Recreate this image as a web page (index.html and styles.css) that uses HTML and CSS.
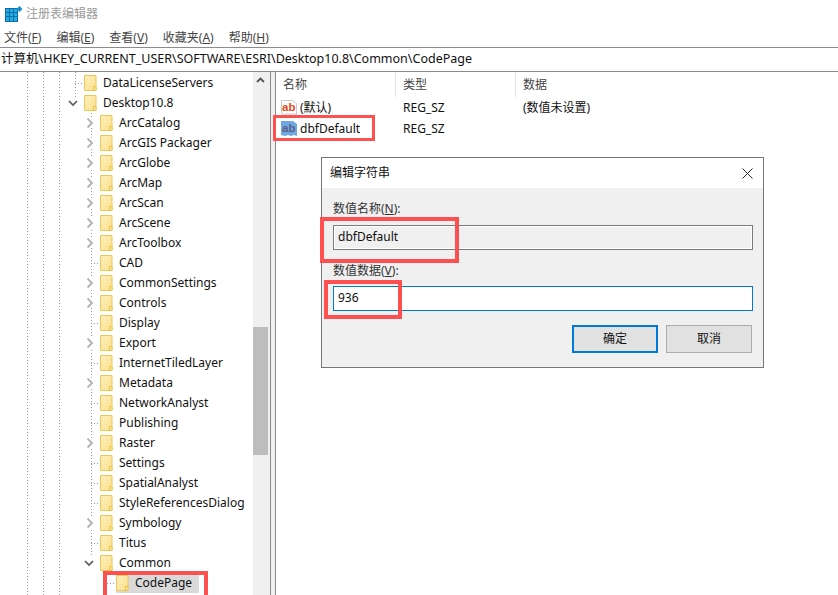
FILE: index.html
```html
<!DOCTYPE html>
<html lang="zh">
<head>
<meta charset="utf-8">
<title>注册表编辑器</title>
<link rel="stylesheet" href="styles.css">
</head>
<body>
<svg class="defs" width="0" height="0" aria-hidden="true">
  <defs>
    <linearGradient id="fg" x1="0" y1="0" x2="1" y2="1"><stop offset="0" stop-color="#fdf0bd"/><stop offset="1" stop-color="#fbdf8c"/></linearGradient>
    <symbol id="folder" viewBox="0 0 13 16">
      <path d="M.5.5h11.500v15H.5z" fill="url(#fg)" stroke="#eec856"/>
      <path d="M9.500 15.500v-4H12v4z" fill="#fbe9a8" stroke="#eec344"/>
    </symbol>
    <symbol id="open" viewBox="0 0 10 10"><path d="M1 3l4 4 4-4" fill="none" stroke="#5a5a5a" stroke-width="1.700"/></symbol>
    <symbol id="closed" viewBox="0 0 10 10"><path d="M3.500 .500L8 5 3.500 9.500" fill="none" stroke="#b4b4b4" stroke-width="1.900"/></symbol>
  </defs>
</svg>
<div class="app">
  <header class="titlebar">
    <svg class="appicon" width="18" height="16" viewBox="0 0 18 16">
      <path d="M0 2h13v14H0z" fill="#0b6fa8"/>
      <path d="M1 3h3v3H1zM5 3h3v3H5zM9 3h3v3H9zM1 7h3v3H1zM5 7h3v3H5zM9 7h3v3H9zM1 11h3v4H1zM5 11h3v4H5zM9 11h3v4H9z" fill="#27a9e6"/>
      <path d="M14.500 0l3 3-3 3-3-3z" fill="#1d8fd0"/>
    </svg>
    <span class="apptitle">注册表编辑器</span>
  </header>
  <nav class="menubar">
    <span class="menu">文件(<u>F</u>)</span>
    <span class="menu">编辑(<u>E</u>)</span>
    <span class="menu">查看(<u>V</u>)</span>
    <span class="menu">收藏夹(<u>A</u>)</span>
    <span class="menu">帮助(<u>H</u>)</span>
  </nav>
  <div class="address">计算机\HKEY_CURRENT_USER\SOFTWARE\ESRI\Desktop10.8\Common\CodePage</div>
  <main class="panes">
    <section class="treepane">
      <div class="tree">
        <div class="row l1 leaf"><i class="tw"></i><svg class="fo"><use href="#folder"/></svg><span>DataLicenseServers</span></div>
        <div class="row l1"><svg class="tw"><use href="#open"/></svg><svg class="fo"><use href="#folder"/></svg><span>Desktop10.8</span></div>
        <div class="row l2"><svg class="tw"><use href="#closed"/></svg><svg class="fo"><use href="#folder"/></svg><span>ArcCatalog</span></div>
        <div class="row l2"><svg class="tw"><use href="#closed"/></svg><svg class="fo"><use href="#folder"/></svg><span>ArcGIS Packager</span></div>
        <div class="row l2"><svg class="tw"><use href="#closed"/></svg><svg class="fo"><use href="#folder"/></svg><span>ArcGlobe</span></div>
        <div class="row l2"><svg class="tw"><use href="#closed"/></svg><svg class="fo"><use href="#folder"/></svg><span>ArcMap</span></div>
        <div class="row l2"><svg class="tw"><use href="#closed"/></svg><svg class="fo"><use href="#folder"/></svg><span>ArcScan</span></div>
        <div class="row l2"><svg class="tw"><use href="#closed"/></svg><svg class="fo"><use href="#folder"/></svg><span>ArcScene</span></div>
        <div class="row l2"><svg class="tw"><use href="#closed"/></svg><svg class="fo"><use href="#folder"/></svg><span>ArcToolbox</span></div>
        <div class="row l2 leaf"><i class="tw"></i><svg class="fo"><use href="#folder"/></svg><span>CAD</span></div>
        <div class="row l2"><svg class="tw"><use href="#closed"/></svg><svg class="fo"><use href="#folder"/></svg><span>CommonSettings</span></div>
        <div class="row l2"><svg class="tw"><use href="#closed"/></svg><svg class="fo"><use href="#folder"/></svg><span>Controls</span></div>
        <div class="row l2 leaf"><i class="tw"></i><svg class="fo"><use href="#folder"/></svg><span>Display</span></div>
        <div class="row l2"><svg class="tw"><use href="#closed"/></svg><svg class="fo"><use href="#folder"/></svg><span>Export</span></div>
        <div class="row l2 leaf"><i class="tw"></i><svg class="fo"><use href="#folder"/></svg><span>InternetTiledLayer</span></div>
        <div class="row l2"><svg class="tw"><use href="#closed"/></svg><svg class="fo"><use href="#folder"/></svg><span>Metadata</span></div>
        <div class="row l2 leaf"><i class="tw"></i><svg class="fo"><use href="#folder"/></svg><span>NetworkAnalyst</span></div>
        <div class="row l2 leaf"><i class="tw"></i><svg class="fo"><use href="#folder"/></svg><span>Publishing</span></div>
        <div class="row l2"><svg class="tw"><use href="#closed"/></svg><svg class="fo"><use href="#folder"/></svg><span>Raster</span></div>
        <div class="row l2 leaf"><i class="tw"></i><svg class="fo"><use href="#folder"/></svg><span>Settings</span></div>
        <div class="row l2 leaf"><i class="tw"></i><svg class="fo"><use href="#folder"/></svg><span>SpatialAnalyst</span></div>
        <div class="row l2 leaf"><i class="tw"></i><svg class="fo"><use href="#folder"/></svg><span>StyleReferencesDialog</span></div>
        <div class="row l2"><svg class="tw"><use href="#closed"/></svg><svg class="fo"><use href="#folder"/></svg><span>Symbology</span></div>
        <div class="row l2 leaf"><i class="tw"></i><svg class="fo"><use href="#folder"/></svg><span>Titus</span></div>
        <div class="row l2"><svg class="tw"><use href="#open"/></svg><svg class="fo"><use href="#folder"/></svg><span>Common</span></div>
        <div class="row l3 leaf selected"><i class="tw"></i><span class="selbox"><svg class="fo"><use href="#folder"/></svg><span>CodePage</span></span></div>
      </div>
      <div class="scrollbar">
        <svg class="arrow" width="15" height="17" viewBox="0 0 15 17"><path d="M4 10l3.500-3.500L11 10" fill="none" stroke="#555" stroke-width="1.800"/></svg>
        <div class="thumb"></div>
      </div>
    </section>
    <div class="splitter"></div>
    <section class="listpane">
      <div class="listhead">
        <div class="c1 h">名称</div>
        <div class="c2 h">类型</div>
        <div class="c3 h">数据</div>
      </div>
      <div class="listrow">
        <div class="c1">
          <svg class="regicon" width="16" height="16" viewBox="0 0 16 16">
            <path d="M.5.500h11l4 3v11l-3-1-3 1-3-1-3 1-3-1z" fill="#fff" stroke="#c9c9c9"/>
            <text x="1" y="10.500" class="ab red">ab</text>
          </svg>
          <span>(默认)</span>
        </div>
        <div class="c2">REG_SZ</div>
        <div class="c3">(数值未设置)</div>
      </div>
      <div class="listrow">
        <div class="c1">
          <svg class="regicon" width="16" height="16" viewBox="0 0 16 16">
            <path d="M0 0h12l4 3v12l-3-1-3 1-3-1-3 1-4-1z" fill="#6ea9df"/>
            <text x="1" y="10.500" class="ab blue">ab</text>
          </svg>
          <span>dbfDefault</span>
        </div>
        <div class="c2">REG_SZ</div>
      </div>
    </section>
  </main>
</div>

<div class="dialog">
  <div class="dlghead">
    <span>编辑字符串</span>
    <svg width="11" height="11" viewBox="0 0 11 11"><path d="M.5.500l10 10M10.500.500l-10 10" stroke="#222" fill="none"/></svg>
  </div>
  <div class="dlgbody">
    <label class="lab">数值名称(<u>N</u>):</label>
    <div class="field readonly">dbfDefault</div>
    <label class="lab second">数值数据(<u>V</u>):</label>
    <div class="field active">936</div>
    <div class="btns">
      <div class="btn default">确定</div>
      <div class="btn">取消</div>
    </div>
  </div>
</div>

<div class="mark m-list"></div>
<div class="mark m-name"></div>
<div class="mark m-value"></div>
<div class="mark m-tree"></div>
</body>
</html>
```
FILE: styles.css
```css
* { box-sizing: border-box; }
html, body { margin: 0; height: 100%; }
body {
  position: relative;
  width: 838px;
  height: 595px;
  overflow: hidden;
  background: #fff;
  color: #111;
  font: 12px/20px "Noto Sans", "Noto Sans CJK SC", sans-serif;
}
.defs { position: absolute; }
u { text-underline-offset: 1px; }

.app { display: flex; flex-direction: column; height: 595px; }

.titlebar { display: flex; align-items: center; height: 27px; padding: 0 0 0 5px; gap: 3px; flex: none; }
.apptitle { color: #9a9a9a; font-size: 12px; }

.menubar { display: flex; height: 20px; flex: none; padding: 1px 0 0 4px; gap: 15px; align-items: center; font-size: 12px; color: #444; }

.address { height: 25px; flex: none; border-top: 1px solid #8c8c8c; border-bottom: 1px solid #8c8c8c; padding-left: 1px; line-height: 22px; font-size: 12.500px; color: #111; white-space: nowrap; }

.panes { display: flex; flex: 1; min-height: 0; }

.treepane { width: 270px; display: flex; flex: none; position: relative; }
.tree {
  width: 253px; flex: none; overflow: hidden; padding-top: 1px;
  background:
    repeating-linear-gradient(#9a9a9a 0 1px, transparent 1px 3px) 27px 0 / 1px 100% no-repeat,
    repeating-linear-gradient(#9a9a9a 0 1px, transparent 1px 3px) 43px 0 / 1px 100% no-repeat,
    repeating-linear-gradient(#9a9a9a 0 1px, transparent 1px 3px) 59px 0 / 1px 100% no-repeat,
    repeating-linear-gradient(#9a9a9a 0 1px, transparent 1px 3px) 75px 0 / 1px 25px no-repeat,
    repeating-linear-gradient(#9a9a9a 0 1px, transparent 1px 3px) 91px 41px / 1px 442px no-repeat;
}
.row { display: flex; align-items: center; height: 20px; white-space: nowrap; }
.l1 { padding-left: 68px; }
.l2 { padding-left: 84px; }
.l3 { padding-left: 100px; }
.tw { width: 16px; height: 10px; flex: none; display: block; padding: 0 6px 0 0; background: #fff; }
.leaf .tw { background: repeating-linear-gradient(90deg, #9a9a9a 0 1px, transparent 1px 3px) 7px 50% / 7px 1px no-repeat; padding: 0; }
.fo { width: 13px; height: 16px; flex: none; margin-right: 6px; display: block; }
.selbox { display: flex; align-items: center; height: 19px; width: 83px; background: #d9d9d9; }
.selbox .fo { margin-right: 6px; }

.scrollbar { width: 17px; background: #f0f0f0; position: relative; flex: none; }
.arrow { display: block; }
.thumb { position: absolute; left: 0; top: 255px; width: 15px; height: 128px; background: #bdbdbd; }

.splitter { width: 6px; flex: none; background: #f0f0f0; border-left: 1px solid #8a8a92; border-right: 1px solid #8a8a92; }

.listpane { flex: 1; min-width: 0; }
.listhead { display: flex; height: 25px; align-items: stretch; }
.h { display: flex; align-items: center; color: #444; font-size: 12px; border-right: 1px solid #e4e4e4; padding: 1px 0 0 7px; }
.listhead .c1 { width: 120px; }
.listhead .c2 { width: 120px; }
.listhead .c3 { width: 120px; border-right: 0; }

.listrow { display: flex; height: 21px; align-items: center; }
.listrow .c1 { width: 120px; padding-left: 5px; display: flex; align-items: center; gap: 3px; }
.listrow .c2 { width: 120px; padding-left: 7px; }
.listrow .c3 { padding-left: 7px; }
.regicon { flex: none; display: block; }
.ab { font: bold 11.500px "Liberation Sans", sans-serif; }
.red { fill: #dd4a17; }
.blue { fill: #5a5f8f; }

.dialog { position: absolute; left: 321px; top: 157px; width: 443px; height: 211px; border: 1px solid #767676; background: #f0f0f0; display: flex; flex-direction: column; }
.dlghead { height: 30px; flex: none; background: #fff; display: flex; align-items: center; justify-content: space-between; padding: 0 10px 0 8px; font-size: 12px; color: #111; }
.dlgbody { padding: 11px 10px 0 11px; flex: 1; }
.lab { display: block; height: 26px; line-height: 20px; font-size: 12px; color: #333; }
.second { margin-top: 11px; height: 25px; }
.field { height: 25px; width: 420px; padding-left: 4px; line-height: 21px; border: 1px solid #7a7a7a; background: #f0f0f0; box-shadow: inset 0 0 0 1px #fff; }
.field.active { border-color: #0078d7; background: #fff; box-shadow: none; }
.btns { display: flex; justify-content: flex-end; gap: 8px; margin-top: 14px; width: 420px; padding-right: 1px; }
.btn { width: 86px; height: 28px; display: flex; align-items: center; justify-content: center; background: #e1e1e1; border: 1px solid #adadad; font-size: 12px; }
.btn.default { border: 2px solid #0078d7; }

.mark { position: absolute; border: 4px solid #fd5050; }
.m-list { left: 273px; top: 115px; width: 102px; height: 26px; border-width: 3px; }
.m-name { left: 320px; top: 217px; width: 139px; height: 46px; }
.m-value { left: 324px; top: 280px; width: 78px; height: 39px; }
.m-tree { left: 103px; top: 571px; width: 105px; height: 30px; }
```
